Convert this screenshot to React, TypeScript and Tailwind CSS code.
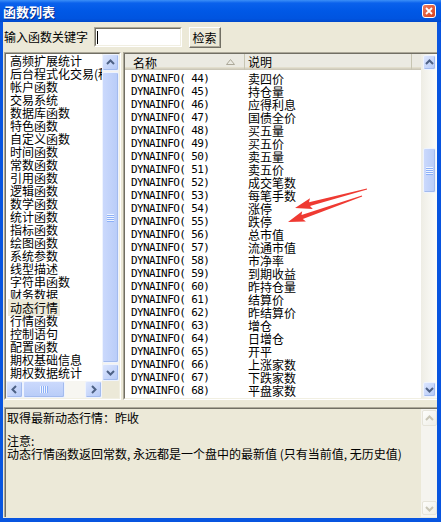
import React from 'react';

type Dir = 'up' | 'down' | 'left' | 'right';

const chevronPath: Record<Dir, string> = {
  up: 'M1 6 L4.5 2.5 L8 6',
  down: 'M1 3 L4.5 6.5 L8 3',
  left: 'M6 1 L2.5 4.5 L6 8',
  right: 'M3 1 L6.5 4.5 L3 8',
};

const Chevron = ({ dir, color }: { dir: Dir; color: string }) => (
  <svg width="9" height="9" viewBox="0 0 9 9">
    <path d={chevronPath[dir]} fill="none" stroke={color} strokeWidth="2" />
  </svg>
);

const SbButton = ({ dir, className = '' }: { dir: Dir; className?: string }) => (
  <div
    className={`flex shrink-0 items-center justify-center rounded-[2px] border border-[#EEF3FE] bg-linear-to-br from-[#DCE6FE] to-[#B4C8F6] shadow-[inset_-1px_-1px_0_#A3BBEE] ${className}`}
  >
    <Chevron dir={dir} color="#4D6185" />
  </div>
);

const SbButtonOff = ({ dir, className = '' }: { dir: Dir; className?: string }) => (
  <div
    className={`flex shrink-0 items-center justify-center rounded-[2px] border border-[#E6E4DA] bg-linear-to-br from-[#FDFDFB] to-[#EFEEE7] ${className}`}
  >
    <Chevron dir={dir} color="#C9C6B6" />
  </div>
);

const VThumb = ({ className = '' }: { className?: string }) => (
  <div
    className={`flex items-center justify-center rounded-[2px] border border-[#EEF3FE] bg-linear-to-r from-[#CBD9FC] to-[#B8CCF8] shadow-[inset_-1px_-1px_0_#A3BBEE] ${className}`}
  >
    <div className="flex flex-col">
      {[0, 1, 2, 3].map((i) => (
        <div key={i} className="w-[7px] h-[2px] border-t border-t-[#F0F5FE] border-b border-b-[#8CB0F8]" />
      ))}
    </div>
  </div>
);

const HThumb = ({ className = '' }: { className?: string }) => (
  <div
    className={`flex items-center justify-center rounded-[2px] border border-[#EEF3FE] bg-linear-to-b from-[#CBD9FC] to-[#B8CCF8] shadow-[inset_-1px_-1px_0_#A3BBEE] ${className}`}
  >
    <div className="flex">
      {[0, 1, 2, 3].map((i) => (
        <div key={i} className="w-[2px] h-[7px] border-l border-l-[#F0F5FE] border-r border-r-[#8CB0F8]" />
      ))}
    </div>
  </div>
);

const groups = [
  '高频扩展统计',
  '后台程式化交易(程序化)',
  '帐户函数',
  '交易系统',
  '数据库函数',
  '特色函数',
  '自定义函数',
  '时间函数',
  '常数函数',
  '引用函数',
  '逻辑函数',
  '数学函数',
  '统计函数',
  '指标函数',
  '绘图函数',
  '系统参数',
  '线型描述',
  '字符串函数',
  '财务数据',
  '动态行情',
  '行情函数',
  '控制语句',
  '配置函数',
  '期权基础信息',
  '期权数据统计',
];

const rows: [number, string][] = [
  [44, '卖四价'],
  [45, '持仓量'],
  [46, '应得利息'],
  [47, '国债全价'],
  [48, '买五量'],
  [49, '买五价'],
  [50, '卖五量'],
  [51, '卖五价'],
  [52, '成交笔数'],
  [53, '每笔手数'],
  [54, '涨停'],
  [55, '跌停'],
  [56, '总市值'],
  [57, '流通市值'],
  [58, '市净率'],
  [59, '到期收益'],
  [60, '昨持仓量'],
  [61, '结算价'],
  [62, '昨结算价'],
  [63, '增仓'],
  [64, '日增仓'],
  [65, '开平'],
  [66, '上涨家数'],
  [67, '下跌家数'],
  [68, '平盘家数'],
  [69, '买卖差'],
];

// red annotation arrow, tail thin -> head wide
const arrowPoints = (tx: number, ty: number, hx: number, hy: number) => {
  const dx = hx - tx;
  const dy = hy - ty;
  const len = Math.hypot(dx, dy);
  const ux = dx / len;
  const uy = dy / len;
  const nx = -uy;
  const ny = ux;
  const bx = hx - ux * 15;
  const by = hy - uy * 15;
  const p = (x: number, y: number) => `${x.toFixed(1)},${y.toFixed(1)}`;
  return [
    p(tx + nx * 0.5, ty + ny * 0.5),
    p(bx + nx * 2, by + ny * 2),
    p(bx - ux * 2 + nx * 5.5, by - uy * 2 + ny * 5.5),
    p(hx, hy),
    p(bx - ux * 2 - nx * 5.5, by - uy * 2 - ny * 5.5),
    p(bx - nx * 2, by - ny * 2),
    p(tx - nx * 0.5, ty - ny * 0.5),
  ].join(' ');
};

const App = () => {
  return (
    <div className="relative w-[441px] h-[522px] flex flex-col overflow-hidden bg-[#0855E0] font-['Noto_Sans_CJK_SC','Noto_Sans',sans-serif] text-[12px] leading-[13px] text-black">
      {/* Title bar */}
      <div className="h-[22px] shrink-0 flex items-center justify-between pl-[3px] pr-[5px] bg-[linear-gradient(to_bottom,#3C8FF7_0%,#0A61EC_14%,#0058E6_50%,#0054E0_85%,#0048CB_100%)]">
        <span className="text-white font-bold text-[13px] leading-[15px] [text-shadow:1px_1px_0_#0B2E8A]">函数列表</span>
        <div className="w-[14px] h-[14px] flex items-center justify-center rounded-[3px] border border-white bg-linear-to-br from-[#EE7A5C] to-[#D5401C]">
          <svg width="8" height="8" viewBox="0 0 8 8">
            <path d="M1 1 L7 7 M7 1 L1 7" stroke="#fff" strokeWidth="1.8" />
          </svg>
        </div>
      </div>

      {/* Body */}
      <div className="flex-1 ml-[3px] mr-[4px] mb-[4px] bg-[#ECE9D8] flex flex-col">
        {/* Search row */}
        <div className="mt-[5px] h-[21px] shrink-0 flex items-start">
          <span className="pl-[1px] w-[85px] mt-[3px]">输入函数关键字</span>
          <div className="ml-[6px] w-[88px] h-[20px] border border-t-[#ACA899] border-l-[#ACA899] border-b-white border-r-white">
            <div className="h-full bg-white border border-t-[#716F64] border-l-[#716F64] border-b-[#F1EFE2] border-r-[#F1EFE2] flex items-center pl-[1px]">
              <div className="w-[1px] h-[13px] bg-black" />
            </div>
          </div>
          <div className="ml-[7px] w-[32px] h-[21px] border border-t-white border-l-white border-b-[#716F64] border-r-[#716F64]">
            <div className="h-full flex items-center justify-center border-b border-r border-b-[#ACA899] border-r-[#ACA899]">
              检索
            </div>
          </div>
        </div>

        {/* Lists */}
        <div className="mt-[4px] h-[348px] shrink-0 flex pl-[1px] gap-[2px]">
          {/* Left list */}
          <div className="w-[117px] h-full border border-t-[#ACA899] border-l-[#ACA899] border-b-white border-r-white">
            <div className="h-full flex flex-col bg-white border border-t-[#716F64] border-l-[#716F64] border-b-[#F1EFE2] border-r-[#F1EFE2]">
              <div className="flex flex-1 min-h-0">
                <div className="flex-1 overflow-hidden">
                  {groups.map((g) => (
                    <div key={g} className="h-[13px] pl-[2px] whitespace-nowrap">
                      <span className={g === '动态行情' ? 'px-[2px] bg-[#ECE9D8]' : 'px-[2px]'}>{g}</span>
                    </div>
                  ))}
                </div>
                <div className="w-[17px] flex flex-col bg-[#F4F3EE]">
                  <SbButton dir="up" className="h-[17px]" />
                  <VThumb className="flex-1 my-[1px]" />
                  <SbButton dir="down" className="h-[17px]" />
                </div>
              </div>
              <div className="flex h-[17px] shrink-0">
                <div className="flex-1 flex bg-[#F7F6F1]">
                  <SbButton dir="left" className="w-[17px]" />
                  <HThumb className="w-[42px]" />
                  <div className="flex-1" />
                  <SbButton dir="right" className="w-[17px]" />
                </div>
                <div className="w-[17px] bg-[#ECE9D8]" />
              </div>
            </div>
          </div>

          {/* Right list */}
          <div className="flex-1 h-full border-l border-t border-b border-t-[#ACA899] border-l-[#ACA899] border-b-white">
            <div className="h-full flex bg-white border-l border-t border-b border-t-[#716F64] border-l-[#716F64] border-b-[#F1EFE2]">
              <div className="flex-1 flex flex-col overflow-hidden">
                <div className="h-[16px] shrink-0 flex bg-[#EBEAE2] shadow-[inset_0_-1px_0_#CBC7B8,inset_0_-2px_0_#D6D2C2,inset_0_-3px_0_#E2DECD] leading-[15px]">
                  <div className="w-[120px] shrink-0 flex items-center pl-[8px] pr-[9px] border-r border-r-[#C7C5B2]">
                    <span>名称</span>
                    <svg className="ml-auto" width="9" height="6" viewBox="0 0 9 6">
                      <path d="M4.5 0.5 L8.5 5.5 L0.5 5.5 Z" fill="none" stroke="#ACA899" strokeWidth="1" />
                    </svg>
                  </div>
                  <div className="w-[167px] shrink-0 pl-[3px] border-r border-r-[#C7C5B2]">说明</div>
                  <div className="flex-1" />
                </div>
                <div className="pt-[2px]">
                  {rows.map(([n, desc]) => (
                    <div key={n} className="h-[13px] flex">
                      <div className="w-[120px] shrink-0 pl-[6px] whitespace-pre font-['DejaVu_Sans_Mono',monospace] text-[11px] tracking-[-0.6px]">
                        {`DYNAINFO( ${n})`}
                      </div>
                      <div className="pl-[3px] whitespace-nowrap">{desc}</div>
                    </div>
                  ))}
                </div>
              </div>
              <div className="w-[16px] flex flex-col bg-linear-to-r from-[#EEEDE5] to-[#FDFDFA] pl-[2px] pr-[1px] py-[1px]">
                <SbButton dir="up" className="h-[15px]" />
                <div className="h-[78px]" />
                <VThumb className="h-[45px]" />
                <div className="flex-1" />
                <SbButton dir="down" className="h-[15px]" />
              </div>
            </div>
          </div>
        </div>

        {/* Description box */}
        <div className="mt-[7px] ml-[1px] h-[110px] shrink-0 flex border-t border-l border-t-[#ACA899] border-l-[#ACA899]">
          <div className="flex-1 flex border-t border-l border-t-[#716F64] border-l-[#716F64]">
            <div className="flex-1 pl-[1px] pt-[2px]">
              <div>取得最新动态行情：昨收</div>
              <div className="h-[10px]" />
              <div>注意:</div>
              <div className="whitespace-nowrap">动态行情函数返回常数, 永远都是一个盘中的最新值 (只有当前值, 无历史值)</div>
            </div>
            <div className="w-[16px] flex flex-col justify-between bg-[#F5F4EF] pt-[1px] pb-[2px] pl-[1px]">
              <SbButtonOff dir="up" className="h-[16px]" />
              <SbButtonOff dir="down" className="h-[14px]" />
            </div>
          </div>
        </div>
      </div>

      {/* Annotation arrows */}
      <svg className="absolute inset-0 pointer-events-none" width="441" height="522" viewBox="0 0 441 522">
        <polygon points={arrowPoints(367, 189, 295, 208)} fill="#EF3A32" />
        <polygon points={arrowPoints(362, 196, 288, 222)} fill="#EF3A32" />
      </svg>
    </div>
  );
};

export default App;
